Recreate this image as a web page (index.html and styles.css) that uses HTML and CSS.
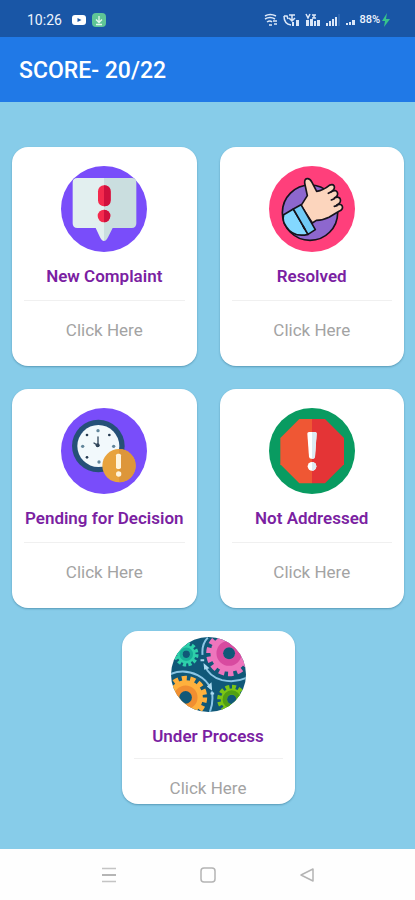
FILE: index.html
```html
<!DOCTYPE html>
<html lang="en">
<head>
<meta charset="utf-8">
<meta name="viewport" content="width=device-width, initial-scale=1">
<title>Score</title>
<link rel="stylesheet" href="styles.css">
</head>
<body>
<div class="status">
  <span class="time">10:26</span>
  <svg class="notes" viewBox="0 0 36 16" width="36" height="16" aria-hidden="true">
    <rect x="1" y="3" width="14" height="10" rx="3" fill="#fff"/><path d="M6.500 6l4 2-4 2z" fill="#1956a6"/>
    <rect x="21" y="1" width="14" height="14" rx="4" fill="#5fc596"/><path d="M28 4v6M25 7.500l3 3 3-3M25 12.500h6" fill="none" stroke="#e4f8ed" stroke-width="1.300"/>
  </svg>
  <svg class="signals" viewBox="0 0 92 16" width="92" height="16" aria-hidden="true">
    <g fill="none" stroke="#dbe7f8" stroke-width="1.500">
      <path d="M1 4q5-3 11 0M1 7q5-3 10 0M3 10q3-2 5 0M5 13h3M9 9h4M10 12h3"/>
      <path d="M20 4q0 8 7 9M20 4l3 0 1 3M25 3h6M28 3v5M25 6l3 3 3-3"/>
      <path d="M42 2l2 4 2-4M48 3h4M48 6h4M50 3v3"/>
    </g>
    <g fill="#dbe7f8">
      <path d="M28 10h2v4h-2zM32 8h3v6h-3zM42 8h3v6h-3zM46 7h3v7h-3zM50 9h2v5h-2zM53 8h3v6h-3z"/>
      <path d="M62 11h2v3h-2zM65 9h2v5h-2zM68 7h2v7h-2zM71 5h2v9h-2z"/>
      <path d="M82 11h2v2h-2zM85 10h2v3h-2zM88 8h3v5h-3z"/>
    </g>
    <path d="M75 2v12" stroke="#4778bb"/>
  </svg>
  <span class="battery">88%</span>
  <svg viewBox="0 0 8 14" width="8" height="14" aria-hidden="true"><path d="M5 0L0 8h3l-1 6 6-8H4z" fill="#37c48b"/></svg>
</div>
<header class="bar"><h1>SCORE- 20/22</h1></header>
<main class="cards">
  <a class="card" href="#new">
    <svg class="icon" viewBox="33 18 258 258" aria-hidden="true">
      <circle cx="162" cy="147" r="129" fill="#794dfa"/>
      <path d="M82 54h80v189q-7 0-12-11l-13-28H82q-14 0-14-14V68q0-14 14-14z" fill="#e2efef"/>
      <path d="M162 54h83q14 0 14 14v122q0 14-14 14h-57l-14 28q-5 11-12 11z" fill="#cadedf"/>
      <rect x="144" y="76" width="38" height="63" rx="18" fill="#f42a4d"/>
      <path d="M162 76q20 0 20 20v23q0 20-20 20z" fill="#cf103d"/>
      <circle cx="162" cy="168" r="19" fill="#f42a4d"/><path d="M162 149a19 19 0 0 1 0 38z" fill="#cf103d"/>
    </svg>
    <h2>New Complaint</h2>
    <span class="action">Click Here</span>
  </a>
  <a class="card" href="#resolved">
    <svg class="icon" viewBox="31 18 258 258" aria-hidden="true">
      <circle cx="160" cy="147" r="129" fill="#ff3f7b"/>
      <g stroke="#17131c" stroke-width="5" stroke-linejoin="round" stroke-linecap="round">
        <circle cx="154" cy="158" r="83" fill="#8d67ce"/>
        <path d="M127 137l19-30-8-38q-1-14 10-13 7 1 12 11l14 27q20-3 38-18 10-5 14 1 5 9-8 18 14-7 18 2 4 11-9 17 15-6 18 4 3 11-11 17 14-5 17 4 3 10-10 15l-30 18q-17 9-38 9l-12 8z" fill="#fcd5bd"/>
        <path d="M218 95l-9 5M227 116l-9 4M235 137l-8 2" fill="none"/>
        <path d="M75 164l29-17 44 76q-43 11-66-24-12-17-7-35z" fill="#83d8ff"/>
        <path d="M104 147l23-13 43 75-22 14z" fill="#70caf6"/>
        <path d="M133 198l5 9" fill="none"/>
      </g>
    </svg>
    <h2>Resolved</h2>
    <span class="action">Click Here</span>
  </a>
  <a class="card" href="#pending">
    <svg class="icon" viewBox="34 26 258 258" aria-hidden="true">
      <circle cx="163" cy="155" r="129" fill="#794dfa"/>
      <circle cx="146" cy="140" r="79" fill="#255078"/>
      <circle cx="146" cy="140" r="63" fill="#f2f9fc"/>
      <g fill="#62869b"><circle cx="145" cy="94" r="5"/><circle cx="192" cy="141" r="5"/><circle cx="148" cy="188" r="5"/><circle cx="99" cy="141" r="5"/></g>
      <g fill="#253a50"><circle cx="112" cy="107" r="4"/><circle cx="179" cy="107" r="4"/><circle cx="112" cy="174" r="4"/><circle cx="144" cy="138" r="6"/></g>
      <path d="M145 140v-27M145 139l-12-8" stroke="#34495c" stroke-width="4" stroke-linecap="round"/>
      <circle cx="208" cy="199" r="50" fill="#e8a33d"/>
      <path d="M208 149a50 50 0 0 1 0 100z" fill="#dd963a"/>
      <rect x="199" y="163" width="15" height="46" rx="5" fill="#fff4dc"/><circle cx="207" cy="224" r="8" fill="#fff4dc"/>
    </svg>
    <h2>Pending for Decision</h2>
    <span class="action">Click Here</span>
  </a>
  <a class="card" href="#not-addressed">
    <svg class="icon" viewBox="31 26 258 258" aria-hidden="true">
      <circle cx="160" cy="155" r="129" fill="#099b61"/>
      <path d="M160 59h-38l-57 57v79l57 57h38z" fill="#ef5734"/>
      <path d="M160 59h39l57 57v79l-57 57h-39z" fill="#e43436"/>
      <path d="M146 103q0-5 5-5h18q5 0 5 5l-5 69q-1 6-6 6h-6q-5 0-6-6z" fill="#fff"/>
      <path d="M160 98h9q5 0 5 5l-5 69q-1 6-6 6h-3z" fill="#dceaf2"/>
      <circle cx="160" cy="201" r="13" fill="#fff"/><path d="M160 188a13 13 0 0 1 0 26z" fill="#dceaf2"/>
    </svg>
    <h2>Not Addressed</h2>
    <span class="action">Click Here</span>
  </a>
  <a class="card small" href="#process">
    <svg class="icon" viewBox="45 21 226 226" aria-hidden="true">
      <defs><clipPath id="disc"><circle cx="158" cy="134" r="113"/></clipPath></defs>
      <g clip-path="url(#disc)" fill="none">
        <path d="M45 21h226v226H45z" fill="#105878"/>
        <circle cx="91" cy="73" r="28" fill="#2ed0aa"/>
        <circle cx="91" cy="73" r="31" stroke="#2ed0aa" stroke-width="12" pathLength="120" stroke-dasharray="6 4"/>
        <circle cx="91" cy="73" r="16" stroke="#17af98" stroke-width="9"/><circle cx="91" cy="73" r="11" fill="#105878"/>
        <circle cx="220" cy="70" r="56" fill="#ee75bd"/>
        <circle cx="220" cy="70" r="60" stroke="#ee75bd" stroke-width="18" pathLength="140" stroke-dasharray="6 4"/>
        <circle cx="220" cy="70" r="28" stroke="#d84aa0" stroke-width="20"/><circle cx="220" cy="70" r="18" fill="#105878"/>
        <circle cx="89" cy="203" r="52" fill="#ffb13d"/>
        <circle cx="89" cy="203" r="56" stroke="#ffb13d" stroke-width="18" pathLength="140" stroke-dasharray="6 4"/>
        <circle cx="89" cy="203" r="27" stroke="#f18f31" stroke-width="18"/><circle cx="89" cy="203" r="19" fill="#105878"/>
        <circle cx="228" cy="209" r="33" fill="#7bc515"/>
        <circle cx="228" cy="209" r="37" stroke="#7bc515" stroke-width="14" pathLength="120" stroke-dasharray="6 4"/>
        <circle cx="228" cy="209" r="21" stroke="#519f14" stroke-width="13"/><circle cx="228" cy="209" r="14" fill="#105878"/>
        <g stroke="#8bc6e5" stroke-width="6">
          <path d="M40 134q43-19 85 2 29 15 39 40M147 106q12 34 52 45 39 9 73-7"/>
          <path d="M156 23q-19 19-16 52M168 185q6 30-6 62"/>
        </g>
        <path d="M143 99l18 16-16 5zM153 170l14-13 2 26zM134 88h11v6h-11zM164 188h11v6h-11z" fill="#acdaf0"/>
      </g>
    </svg>
    <h2>Under Process</h2>
    <span class="action">Click Here</span>
  </a>
</main>
<nav class="nav">
  <button type="button" aria-label="Recent apps"><svg viewBox="0 0 16 16" width="16" height="16"><path d="M1 1.500h14M1 14.500h14" stroke="#c4c4c4" stroke-width="1.500"/><path d="M1 8h14" stroke="#9c9c9c" stroke-width="1.500"/></svg></button>
  <button type="button" aria-label="Home"><svg viewBox="0 0 16 16" width="16" height="16"><rect x="1" y="1" width="14" height="14" rx="3" fill="none" stroke="#b4b4b4" stroke-width="1.500"/></svg></button>
  <button type="button" aria-label="Back"><svg viewBox="0 0 16 16" width="16" height="16"><path d="M14 2v12L2 8z" fill="none" stroke="#b4b4b4" stroke-width="1.500" stroke-linejoin="round"/></svg></button>
</nav>
</body>
</html>
```
FILE: styles.css
```css
* { box-sizing: border-box; }
body {
  margin: 0;
  min-height: 100vh;
  display: flex;
  flex-direction: column;
  background: #87cce9;
  font-family: Roboto, sans-serif;
}
h1, h2 { margin: 0; font-weight: 500; }
.status {
  display: flex;
  align-items: center;
  height: 37px;
  padding: 2px 25px 0 27px;
  background: #1956a6;
  color: #eef4fd;
}
.time { font-size: 14px; }
.notes { margin-left: 9px; }
.signals { margin-left: auto; }
.battery { margin: 0 2px 0 3px; font-size: 11px; font-weight: 500; }
.bar {
  display: flex;
  align-items: center;
  height: 65px;
  padding: 2px 19px 0;
  background: #2079e7;
  color: #fff;
}
.bar h1 { font-size: 23px; line-height: 28px; }
.cards {
  flex: 1;
  display: grid;
  grid-template-columns: 1fr 1fr;
  align-content: start;
  gap: 23px;
  padding: 45px 11px 45px 12px;
}
.card {
  display: flex;
  flex-direction: column;
  align-items: center;
  height: 219px;
  padding: 19px 12px 0;
  border-radius: 16px;
  background: #fff;
  box-shadow: 0 1px 2px rgba(20, 80, 110, .4);
  text-decoration: none;
  overflow: hidden;
}
.icon { width: 86px; height: 86px; flex: none; }
.card h2 {
  width: 100%;
  padding: 14px 0 13px;
  border-bottom: 1px solid #f0f0f0;
  color: #7b1fa2;
  font-size: 17px;
  line-height: 21px;
  font-weight: 600;
  text-align: center;
  white-space: nowrap;
}
.action {
  margin-top: 19px;
  color: #a3a3a3;
  font-size: 17px;
  line-height: 21px;
}
.small {
  grid-column: 1 / -1;
  justify-self: center;
  width: 173px;
  height: 173px;
  padding-top: 6px;
}
.small .icon { width: 75px; height: 75px; }
.small h2 { padding-bottom: 11px; }
.nav {
  display: flex;
  justify-content: center;
  align-items: center;
  gap: 59px;
  height: 51px;
  background: #fefefe;
}
.nav button {
  display: grid;
  place-items: center;
  width: 40px;
  height: 40px;
  padding: 0;
  border: 0;
  background: none;
}
```
